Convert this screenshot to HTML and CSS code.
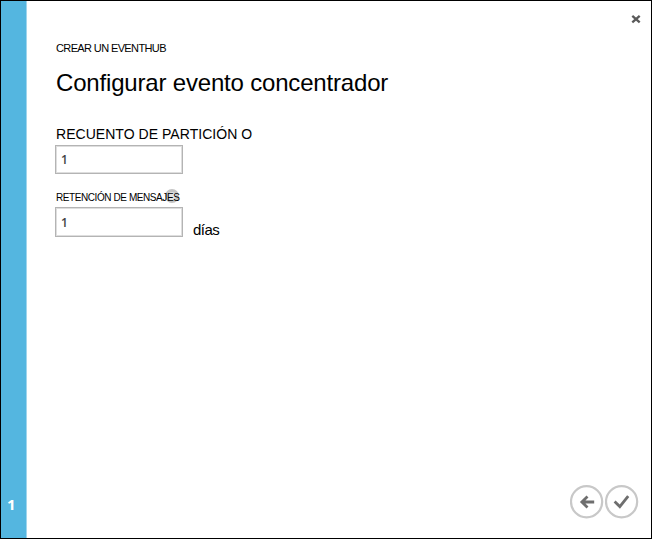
FILE: index.html
```html
<!DOCTYPE html>
<html lang="es">
<head>
<meta charset="utf-8">
<title>Crear un EventHub</title>
<link rel="stylesheet" href="styles.css">
</head>
<body>
<div class="dialog">
  <aside class="steps"><span class="step">1</span></aside>
  <main class="content">
    <button class="close" aria-label="Cerrar">
      <svg width="10" height="10" viewBox="0 0 10 10"><path d="M1.3 1.8 8.7 8.4M8.7 1.8 1.3 8.4"/></svg>
    </button>
    <p class="eyebrow">CREAR UN EVENTHUB</p>
    <h1 class="title">Configurar evento concentrador</h1>
    <label class="label" for="partitions">RECUENTO DE PARTICIÓN O</label>
    <input class="field" id="partitions" value="1">
    <label class="label small" for="retention"><span class="caption">RETENCIÓN DE MENSAJES<i class="help"></i></span></label>
    <div class="row">
      <input class="field" id="retention" value="1">
      <span class="unit">días</span>
    </div>
    <div class="actions">
      <button class="round" aria-label="Atrás">
        <svg width="34" height="34" viewBox="0 0 34 34"><circle cx="16.6" cy="16.8" r="15.6"/><path d="M24.2 17H12.2M17.5 11.6 11.9 17 17.5 22.4"/></svg>
      </button>
      <button class="round" aria-label="Aceptar">
        <svg width="34" height="34" viewBox="0 0 34 34"><circle cx="16.6" cy="16.8" r="15.6"/><path d="M9.6 16.6 14.8 21.6 23.2 11.2"/></svg>
      </button>
    </div>
  </main>
</div>
</body>
</html>
```
FILE: styles.css
```css
* { box-sizing: border-box; }
body { margin: 0; background: #fff; }
.dialog {
  display: flex;
  width: 652px;
  height: 539px;
  border: 1px solid #000;
  font-family: "Liberation Sans", Arial, sans-serif;
  color: #000;
}
.steps {
  display: flex;
  align-items: flex-end;
  width: 26px;
  padding: 0 0 25px 6px;
  background: #54b6e0;
  border-right: 1px solid #9fd5ed;
}
.step {
  font: bold 15px/18px "Noto Sans", sans-serif;
  color: #fff;
}
.content {
  display: flex;
  flex-direction: column;
  align-items: flex-start;
  flex: 1;
  padding: 13px 12px 19px 28px;
}
button { padding: 0; border: 0; background: none; }
svg { display: block; fill: none; }
.close { align-self: flex-end; width: 10px; height: 10px; margin-right: -2px; }
.close path { stroke: #5a5a5a; stroke-width: 2.3; }
.eyebrow { margin: 17px 0 0 1px; font-size: 11px; line-height: 14px; letter-spacing: -0.62px; }
.title { margin: 13px 0 0 1px; font-size: 24px; line-height: 30px; font-weight: 400; letter-spacing: -0.18px; white-space: nowrap; }
.label { margin: 26px 0 1px 1px; font-size: 14px; line-height: 20px; letter-spacing: 0.04px; }
.field {
  width: 128px;
  height: 29px;
  padding: 0 5px;
  border: 1px solid #b4b4b4;
  box-shadow: inset 0 0 0 1px #dedede;
  font: 600 12px "Open Sans", sans-serif;
  color: #444;
}
.label.small { margin: 16px 0 2px 1px; font-size: 10px; line-height: 15px; letter-spacing: -0.42px; }
.row .field { height: 30px; }
.caption { position: relative; }
.help {
  position: absolute;
  z-index: -1;
  right: 0;
  top: -3px;
  width: 14px;
  height: 14px;
  border: 3px solid #c4c4c4;
  border-radius: 50%;
  background: #e4e4e4;
}
.row { display: flex; align-items: flex-end; gap: 10px; }
.unit { font-size: 15px; line-height: 17px; letter-spacing: -0.5px; margin-bottom: -1px; }
.actions { display: flex; gap: 1px; margin-top: auto; align-self: flex-end; }
.round { width: 34px; height: 34px; }
.round circle { stroke: #c8c8c8; stroke-width: 2.2; }
.round path { stroke: #6e6e6e; stroke-width: 2.8; }
```
